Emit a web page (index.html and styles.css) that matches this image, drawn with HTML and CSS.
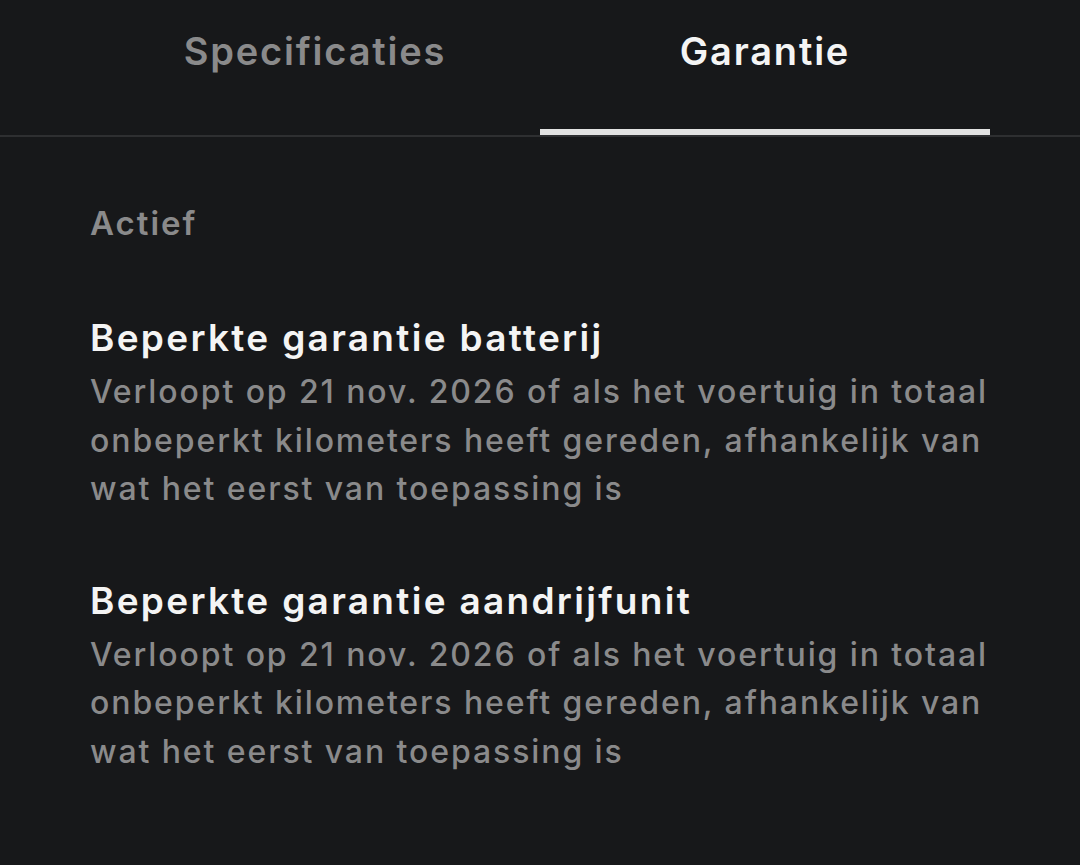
FILE: index.html
```html
<!DOCTYPE html>
<html lang="nl">
<head>
  <meta charset="UTF-8" />
  <meta name="viewport" content="width=device-width, initial-scale=1.0"/>
  <title>Garantie</title>
  <link rel="stylesheet" href="styles.css">
</head>
<body>

<nav class="tabs">
  <a class="tab" href="#">Specificaties</a>
  <a class="tab active" href="#">Garantie</a>
</nav>

<div class="container">
  <h3 class="section-label">Actief</h3>

  <div class="warranty">
    <h2>Beperkte garantie batterij</h2>
    <p>Verloopt op 21 nov. 2026 of als het voertuig in totaal onbeperkt kilometers heeft gereden, afhankelijk van wat het eerst van toepassing is</p>
  </div>

  <div class="warranty">
    <h2>Beperkte garantie aandrijfunit</h2>
    <p>Verloopt op 21 nov. 2026 of als het voertuig in totaal onbeperkt kilometers heeft gereden, afhankelijk van wat het eerst van toepassing is</p>
  </div>
</div>

</body>
</html>
```

FILE: styles.css
```css
body { font-family: Inter, "Noto Sans", sans-serif; margin: 0; padding: 0; background-color: #17181a; color: #f4f4f4; }
.tabs { display: flex; padding: 0 90px; height: 135px; border-bottom: 2px solid #2e2f31; }
.tab { flex: 1; display: flex; justify-content: center; padding-top: 28px; font-size: 38px; font-weight: 600; letter-spacing: 1.8px; color: #8a8a8b; text-decoration: none; box-sizing: border-box; }
.tab.active { color: #f4f4f4; border-bottom: 6px solid #e2e2e2; }
.container { padding: 66px 90px 0; }
.section-label { margin: 0; font-size: 33px; font-weight: 600; letter-spacing: 2px; color: #8a8a8b; line-height: 40px; }
.warranty { margin-top: 72px; }
.warranty + .warranty { margin-top: 64px; }
.warranty h2 { margin: 0 0 7px; font-size: 37px; font-weight: 600; letter-spacing: 2.3px; line-height: 46px; color: #f4f4f4; }
.warranty p { margin: 0; font-size: 32px; font-weight: 500; letter-spacing: 1.9px; line-height: 48.5px; color: #8a8a8b; }
```
